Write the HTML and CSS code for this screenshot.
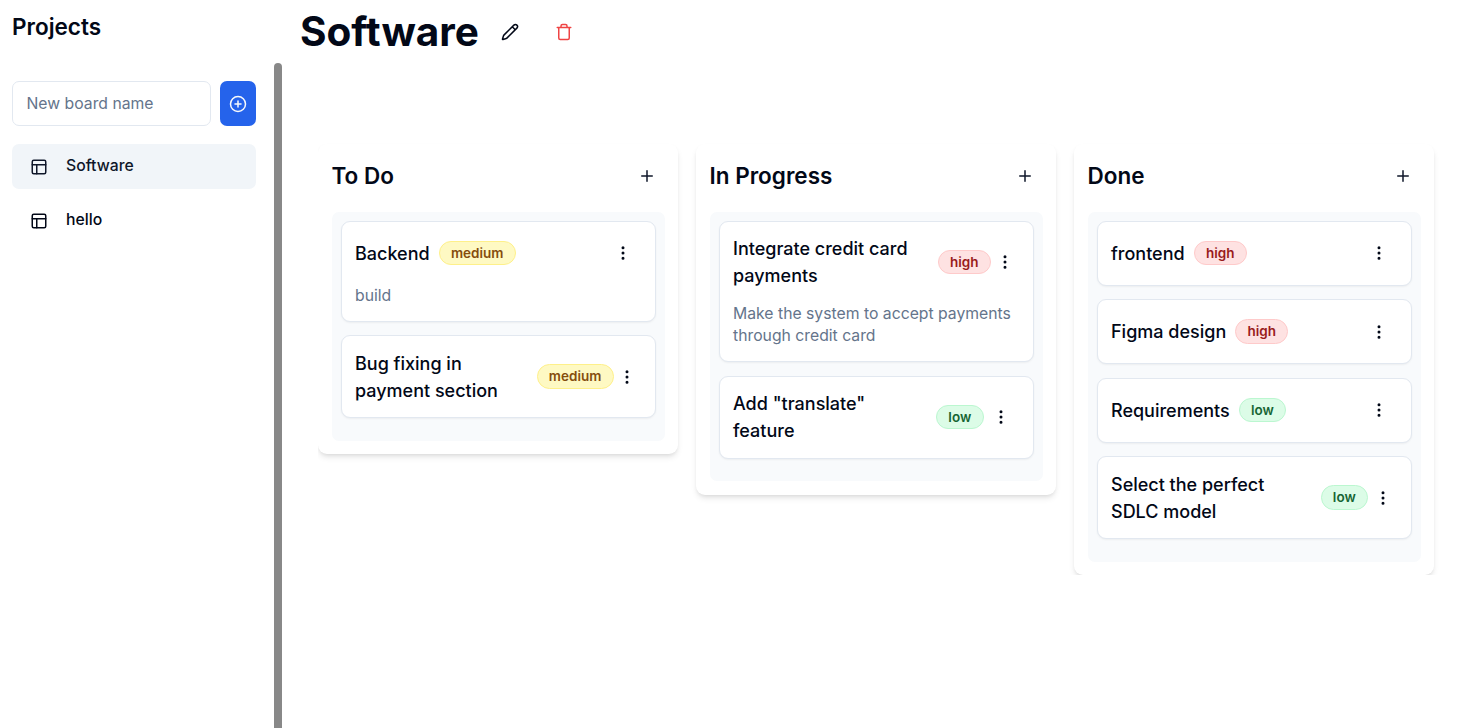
FILE: index.html
```html
<!DOCTYPE html>
<html lang="en">
<head>
<meta charset="utf-8">
<title>Projects</title>
<link rel="stylesheet" href="styles.css">
</head>
<body>
<svg class="sprite" aria-hidden="true">
  <symbol id="layout" viewBox="0 0 24 24"><rect x="3" y="3" width="18" height="18" rx="2"/><path d="M3 9h18M9 21V9"/></symbol>
  <symbol id="plus" viewBox="0 0 24 24"><path d="M12 5v14M5 12h14"/></symbol>
  <symbol id="dots" viewBox="0 0 24 24"><circle cx="12" cy="5" r="1"/><circle cx="12" cy="12" r="1"/><circle cx="12" cy="19" r="1"/></symbol>
</svg>
<div class="app">
  <aside class="sidebar">
    <h2 class="sidebar-title">Projects</h2>
    <div class="sidebar-body">
      <div class="sidebar-content">
        <div class="new-board">
          <input class="new-board-input" placeholder="New board name">
          <button class="new-board-add" aria-label="Add board"><svg class="icon" viewBox="0 0 24 24"><circle cx="12" cy="12" r="10"/><path d="M8 12h8M12 8v8"/></svg></button>
        </div>
        <nav class="boards">
          <a class="board-link board-link-active"><svg class="icon"><use href="#layout"/></svg><span>Software</span></a>
          <a class="board-link"><svg class="icon"><use href="#layout"/></svg><span>hello</span></a>
        </nav>
      </div>
      <div class="scrollbar"></div>
    </div>
  </aside>
  <main class="main">
    <header class="board-header">
      <h1 class="board-title">Software</h1>
      <button class="header-button" aria-label="Rename"><svg class="icon" viewBox="0 0 24 24"><path d="M21.174 6.812a1 1 0 0 0-3.986-3.987L3.842 16.174a2 2 0 0 0-.5.83l-1.321 4.352a.5.5 0 0 0 .623.622l4.353-1.32a2 2 0 0 0 .83-.497zM15 5l4 4"/></svg></button>
      <button class="header-button header-button-danger" aria-label="Delete"><svg class="icon" viewBox="0 0 24 24"><path d="M3 6h18M19 6v14c0 1-1 2-2 2H7c-1 0-2-1-2-2V6M8 6V4c0-1 1-2 2-2h4c1 0 2 1 2 2v2"/></svg></button>
    </header>
    <div class="columns">
      <section class="column">
        <div class="column-header"><h3 class="column-title">To Do</h3><button class="icon-button" aria-label="Add task"><svg class="icon"><use href="#plus"/></svg></button></div>
        <div class="tasks">
          <article class="card">
            <div class="card-top"><h4 class="card-title">Backend</h4><span class="badge badge-medium">medium</span><button class="icon-button menu-button"><svg class="icon"><use href="#dots"/></svg></button></div>
            <p class="card-text">build</p>
          </article>
          <article class="card">
            <div class="card-top"><h4 class="card-title card-title-wrap">Bug fixing in<br>payment section</h4><span class="badge badge-medium">medium</span><button class="icon-button menu-button menu-button-tight"><svg class="icon"><use href="#dots"/></svg></button></div>
          </article>
        </div>
      </section>
      <section class="column">
        <div class="column-header"><h3 class="column-title">In Progress</h3><button class="icon-button" aria-label="Add task"><svg class="icon"><use href="#plus"/></svg></button></div>
        <div class="tasks">
          <article class="card">
            <div class="card-top"><h4 class="card-title card-title-wrap">Integrate credit card<br>payments</h4><span class="badge badge-high">high</span><button class="icon-button menu-button menu-button-snug"><svg class="icon"><use href="#dots"/></svg></button></div>
            <p class="card-text">Make the system to accept payments through credit card</p>
          </article>
          <article class="card">
            <div class="card-top"><h4 class="card-title card-title-wrap">Add "translate"<br>feature</h4><span class="badge badge-low">low</span><button class="icon-button menu-button menu-button-wide"><svg class="icon"><use href="#dots"/></svg></button></div>
          </article>
        </div>
      </section>
      <section class="column">
        <div class="column-header"><h3 class="column-title">Done</h3><button class="icon-button" aria-label="Add task"><svg class="icon"><use href="#plus"/></svg></button></div>
        <div class="tasks">
          <article class="card">
            <div class="card-top"><h4 class="card-title">frontend</h4><span class="badge badge-high">high</span><button class="icon-button menu-button"><svg class="icon"><use href="#dots"/></svg></button></div>
          </article>
          <article class="card">
            <div class="card-top"><h4 class="card-title">Figma design</h4><span class="badge badge-high">high</span><button class="icon-button menu-button"><svg class="icon"><use href="#dots"/></svg></button></div>
          </article>
          <article class="card">
            <div class="card-top"><h4 class="card-title">Requirements</h4><span class="badge badge-low">low</span><button class="icon-button menu-button"><svg class="icon"><use href="#dots"/></svg></button></div>
          </article>
          <article class="card">
            <div class="card-top"><h4 class="card-title card-title-wrap">Select the perfect<br>SDLC model</h4><span class="badge badge-low">low</span><button class="icon-button menu-button menu-button-loose"><svg class="icon"><use href="#dots"/></svg></button></div>
          </article>
        </div>
      </section>
    </div>
  </main>
</div>
</body>
</html>
```

FILE: styles.css
```css
* { box-sizing: border-box; }
html { font-size: 18px; }
body {
  margin: 0;
  background: #fff;
  color: #020817;
  font-family: Inter, "Liberation Sans", sans-serif;
  line-height: 1.5;
}
h1, h2, h3, h4, p { margin: 0; }
button { padding: 0; border: 0; background: none; color: inherit; font: inherit; }
.sprite { display: none; }
.icon {
  width: 18px;
  height: 18px;
  flex: none;
  display: block;
  fill: none;
  stroke: currentColor;
  stroke-width: 2;
  stroke-linecap: round;
  stroke-linejoin: round;
}
.app { display: flex; height: 728px; overflow: hidden; }

.sidebar { width: 282px; flex: none; display: flex; flex-direction: column; }
.sidebar-title { height: 63px; padding: 11px 12px 0; font-size: 22.5px; line-height: 32px; font-weight: 600; }
.sidebar-body { flex: 1; display: flex; justify-content: space-between; }
.sidebar-content { width: 256px; padding: 18px 0 0 12px; }
.scrollbar { width: 8px; background: #888; border-radius: 4px 4px 0 0; }
.new-board { display: flex; gap: 9px; height: 45px; }
.new-board-input {
  flex: 1;
  min-width: 0;
  padding: 0 13.5px;
  border: 1px solid #e2e8f0;
  border-radius: 7px;
  background: #fff;
  font: 400 15.75px Inter, "Liberation Sans", sans-serif;
}
.new-board-input::placeholder { color: #64748b; }
.new-board-add {
  width: 36px;
  display: flex;
  align-items: center;
  justify-content: center;
  border-radius: 7px;
  background: #2563eb;
  color: #f8fafc;
}
.boards { display: flex; flex-direction: column; gap: 9px; padding-top: 18px; }
.board-link {
  display: flex;
  align-items: center;
  gap: 18px;
  height: 45px;
  padding: 0 18px;
  border-radius: 7px;
  font-size: 15.75px;
  font-weight: 500;
}
.board-link .icon { margin-top: 1px; }
.board-link span { padding-bottom: 2px; }
.board-link-active { background: #f1f5f9; color: #0f172a; }

.main { flex: 1; padding-left: 18px; }
.board-header { display: flex; align-items: center; height: 63px; }
.board-title { font-size: 40.5px; line-height: 45px; font-weight: 700; }
.header-button { width: 36px; height: 36px; margin-left: 13px; display: flex; align-items: center; justify-content: center; }
.header-button-danger { margin-left: 18px; color: #ef4444; }
.columns { display: flex; align-items: flex-start; gap: 18px; margin: 63px 0 0 18px; padding-top: 18px; overflow: hidden; }
.column {
  width: 360px;
  flex: none;
  padding: 13.5px;
  border-radius: 9px;
  background: #fff;
  box-shadow: 0 4px 6px -1px rgba(0,0,0,.1), 0 2px 4px -2px rgba(0,0,0,.1);
}
.column-header { display: flex; align-items: center; justify-content: space-between; height: 36px; margin-bottom: 18.1px; }
.column-title { font-size: 22.5px; line-height: 31.5px; font-weight: 600; }
.icon-button { width: 36px; height: 36px; display: flex; align-items: center; justify-content: center; }
.column-header .icon { color: #0f172a; }
.tasks { padding: 9px; border-radius: 7px; background: #f8fafc; }
.card {
  margin-bottom: 13.5px;
  padding: 13.5px;
  border: 1px solid #e2e8f0;
  border-radius: 9px;
  background: #fff;
  box-shadow: 0 1px 2px rgba(0,0,0,.05);
}
.card-top { display: flex; align-items: center; min-height: 36px; }
.card-title { margin-right: 9px; font-size: 18px; line-height: 27px; font-weight: 500; white-space: nowrap; }
.card-title-wrap { flex: 1; }
.menu-button { margin-left: auto; flex: none; }
.menu-button-tight { width: 27.4px; }
.menu-button-snug { width: 28.3px; }
.menu-button-loose { width: 29px; }
.menu-button-wide { width: 35.5px; }
.badge {
  height: 24.5px;
  padding: 0 11.25px;
  border: 1px solid;
  border-radius: 99px;
  font-size: 13.5px;
  line-height: 22.5px;
  font-weight: 600;
}
.badge-medium { background: #fef9c3; border-color: #fef08a; color: #854d0e; }
.badge-high { background: #fee2e2; border-color: #fecaca; color: #991b1b; }
.badge-low { background: #dcfce7; border-color: #bbf7d0; color: #166534; }
.card-text { margin-top: 13.5px; font-size: 15.75px; line-height: 22.5px; color: #64748b; }
```
